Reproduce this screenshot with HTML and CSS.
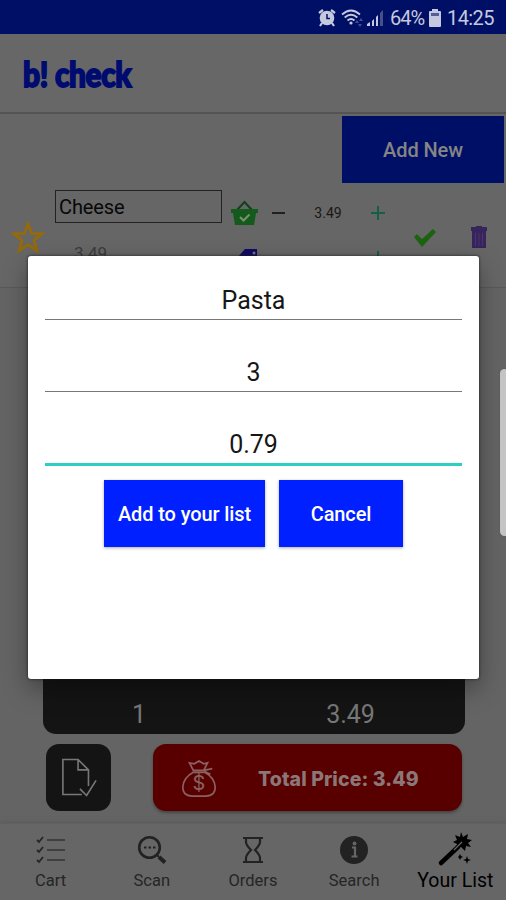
FILE: index.html
```html
<!DOCTYPE html>
<html lang="en">
<head>
<meta charset="utf-8">
<title>b! check</title>
<link rel="stylesheet" href="styles.css">
</head>
<body>
<div class="screen">
  <div class="status">
    <svg class="alarm" viewBox="0 0 18 18"><path d="M1 4 5 1M17 4 13 1M4 14l-2 3M14 14l2 3" stroke="currentColor" stroke-width="2.2"/><circle cx="9" cy="9" r="7.3" fill="currentColor"/><path d="M9 5v4.5h3" fill="none" stroke="#000f66" stroke-width="1.5"/></svg>
    <svg class="wifi" viewBox="0 0 22 18"><g fill="none" stroke="currentColor" stroke-width="1.8"><path d="M1 5.5Q10 -2.5 19 5.5M3.7 8.5Q10 3 16.3 8.5M6.5 11.5Q10 8.5 13.5 11.5"/></g><circle cx="10" cy="14" r="1.6" fill="currentColor"/><path d="m14 14 2-3 2 3zm3 1h4l-2 3zM18 12l2-3 2 3z" fill="#424e8c"/></svg>
    <svg class="signal" viewBox="0 0 17 18"><path d="M0 17v-2l3-2v4zM5 17v-5l2-2v7zM9 17V8l2-2v11z" fill="currentColor"/><path d="M13 17V4l3-3v16z" fill="#46518c"/></svg>
    <span class="percent">64%</span>
    <svg class="battery" viewBox="0 0 12 18"><path d="M3 2V0h6v2h2q1 0 1 1v14q0 1-1 1H1q-1 0-1-1V3q0-1 1-1z" fill="currentColor"/><path d="M2 4h8v3H2z" fill="#535d96"/></svg>
    <span class="clock">14:25</span>
  </div>
  <header class="brand"><span class="logo-b">b!</span><span class="logo-check">check</span></header>
  <div class="toolbar"><button class="add-new">Add New</button></div>
  <div class="item">
    <svg class="star" viewBox="0 0 34 34"><path d="m17 4 3.7 9.3 10.3.5-8 6.4 2.8 10.3L17 24.8 8.200 30.500 11 20.200 3 13.800l10.300-.5z" fill="none" stroke="#956a08" stroke-width="2.800"/></svg>
    <div class="names"><div class="name">Cheese</div><div class="hint">3.49</div></div>
    <div class="steppers">
      <div class="stepper">
        <svg class="basket" viewBox="0 0 27 24"><path d="m6 9 7.500-8L21 9" fill="none" stroke="#10401c" stroke-width="2"/><path d="M0 8h27v4h-2l-2 12H4L2 12H0z" fill="#145a1c"/><path d="m9 16 3.500 3.500 6-6" fill="none" stroke="#7d8f6b" stroke-width="2"/></svg>
        <span class="minus"></span><span class="amount">3.49</span><span class="plus"></span>
      </div>
      <div class="stepper second">
        <svg class="tag" viewBox="0 0 20 18"><path d="m0 8 7-8h12v13l-6 5z" fill="#110a60"/><circle cx="16" cy="4" r="1.500" fill="#777"/></svg>
        <span class="minus"></span><span class="amount"></span><span class="plus"></span>
      </div>
    </div>
    <svg class="check" viewBox="0 0 23 18"><path d="m1 8 3-3 5 5L20 0l3 3L9 18z" fill="#1c6310"/></svg>
    <svg class="trash" viewBox="0 0 16 22"><path d="M0 1h5V0h6v1h5v4H0zM1 5h14v17H1z" fill="#37245b"/><path d="M4.500 7v13M8 7v13M11.500 7v13" stroke="#47376a"/></svg>
  </div>
  <div class="spacer"></div>
  <div class="summary"><span>1</span><span>3.49</span></div>
  <div class="actions">
    <button class="receipt"><svg viewBox="0 0 38 40"><path d="M22 38H2V1h16l11 11v17M18 1v11h11M20 32l7 7 10-16" fill="none" stroke="#777" stroke-width="1.700"/></svg></button>
    <button class="total"><svg viewBox="0 0 36 40"><g fill="none" stroke="#8b6060" stroke-width="1.800"><path d="M12 13C-1 20-4 38 11 38h14c15 0 12-18-1-25zM12 11 8 3l5 1 5-3 5 3 4-1-4 8zM23 11l9-2M24 12l6 3"/></g><text x="18" y="32" text-anchor="middle" class="dollar">$</text></svg><span>Total Price: 3.49</span></button>
  </div>
  <nav class="tabs">
    <a class="tab"><svg viewBox="0 0 30 28"><path d="m1 4 2 2 4-5M1 14l2 2 4-5M1 24l2 2 4-5" fill="none" stroke="#252525" stroke-width="1.800"/><path d="M11 4h18M11 14h18M11 24h18" stroke="#333" stroke-width="1.500"/></svg><span>Cart</span></a>
    <a class="tab"><svg viewBox="0 0 30 28"><circle cx="12.500" cy="11.500" r="10.300" fill="none" stroke="#222" stroke-width="2.600"/><path d="m20 19 2 2" stroke="#222" stroke-width="2"/><path d="m22 21 6 5.500" stroke="#222" stroke-width="4"/><path d="M7 11.500h2.500m2 0H14m2 0h2.500" stroke="#222" stroke-width="2"/></svg><span>Scan</span></a>
    <a class="tab"><svg viewBox="0 0 30 28"><path d="M5 2h20M5 26h20M8 2v4q0 3 5 8-5 5-5 8v4M22 2v4q0 3-5 8 5 5 5 8v4" fill="none" stroke="#222" stroke-width="2.200"/></svg><span>Orders</span></a>
    <a class="tab"><svg viewBox="0 0 30 28"><circle cx="15" cy="14" r="14" fill="#222"/><path d="M13 11.500h3V20M12.500 20.500h6" fill="none" stroke="#666" stroke-width="2.200"/><circle cx="15.500" cy="7.500" r="1.900" fill="#666"/></svg><span>Search</span></a>
    <a class="tab active"><svg viewBox="0 0 34 34"><path d="m3 31 17-16" stroke="#000" stroke-width="4.500" stroke-linecap="round"/><path d="m23 0 2 5 5-3-1 5 5 1-4 3 3 4-5-1-1 5-4-4-5 2 1-5-4-2 4-2-2-5 5 2z" fill="#000"/><path d="m16 18 8-8" stroke="#666" stroke-width="1.200"/><path d="m29 24 1 3 3 1-3 1-1 3-1-3-3-1 3-1zM22 22l1 2 2 1-2 1-1 2-1-2-1-1 1-1z" fill="#000"/></svg><span>Your List</span></a>
  </nav>
  <div class="dialog">
    <div class="field">Pasta</div><div class="field">3</div><div class="field focused">0.79</div>
    <div class="buttons"><button class="submit">Add to your list</button><button class="cancel">Cancel</button></div>
  </div>
  <div class="edge"></div>
</div>
</body>
</html>
```
FILE: styles.css
```css
* { box-sizing: border-box; }
body { margin: 0; font-family: Roboto, sans-serif; }
button { border: 0; padding: 0; font-family: inherit; }
svg { display: block; flex: none; overflow: visible; }
.screen { position: relative; width: 506px; height: 900px; overflow: hidden; display: flex; flex-direction: column; background: #646464; }
.status { height: 34px; flex: none; background: #000f66; color: #c5c9df; display: flex; align-items: center; justify-content: flex-end; padding: 2px 12px 0 0; font-size: 20px; }
.alarm { width: 18px; height: 18px; margin-right: 5px; }
.wifi { width: 22px; height: 18px; margin-right: 4px; }
.signal { width: 17px; height: 18px; margin-right: 6px; }
.percent { width: 34px; margin-right: 5px; white-space: nowrap; letter-spacing: -1px; }
.battery { width: 12px; height: 18px; margin-right: 6px; }
.clock { width: 47px; white-space: nowrap; letter-spacing: -.6px; }
.brand { height: 80px; flex: none; background: #676767; border-bottom: 2px solid #545454; display: flex; align-items: center; padding-left: 23px; color: #000b70; font-family: Lato, sans-serif; font-weight: 900; font-size: 34px; letter-spacing: -.5px; -webkit-text-stroke: 1.800px #000b70; }
.brand span { transform-origin: left center; white-space: nowrap; }
.logo-b { width: 32px; transform: scaleX(.88); }
.logo-check { transform: scaleX(.88); }
.toolbar { height: 70px; flex: none; background: #666; display: flex; justify-content: flex-end; padding: 2px 2px 0 0; }
.add-new { width: 162px; height: 67px; background: #000f66; color: #858585; font-size: 20px; font-weight: 500; letter-spacing: -.1px; }
.item { height: 104px; flex: none; background: #666; border-bottom: 1px solid #595959; display: flex; }
.star { width: 34px; height: 34px; margin: 36px 10px 0 11px; }
.names { width: 167px; padding-top: 6px; }
.name { height: 33px; border: 1px solid #222; padding-left: 3px; font-size: 20px; line-height: 33px; letter-spacing: -.1px; color: #080808; }
.hint { font-size: 17px; line-height: 20px; margin: 20px 0 0 19px; color: #3c3c3c; }
.steppers { width: 191px; padding: 17px 0 0 9px; }
.stepper { display: flex; align-items: center; height: 24px; }
.second { margin-top: 21px; }
.basket { width: 27px; height: 24px; margin-right: 14px; }
.tag { width: 20px; height: 18px; margin: 0 14px 0 7px; }
.minus { width: 13px; height: 2px; background: #202020; }
.amount { width: 86px; text-align: center; font-size: 14px; color: #181818; }
.plus { width: 14px; height: 14px; background: linear-gradient(#146047, #146047) center / 2px 14px no-repeat, linear-gradient(#146047, #146047) center / 14px 2px no-repeat; }
.check { width: 23px; height: 18px; margin-top: 45px; }
.trash { width: 16px; height: 22px; margin: 42px 0 0 35px; }
.spacer { flex: 1; }
.summary { width: 422px; height: 110px; margin-left: 43px; background: #141414; border-radius: 13px; color: #777; display: flex; align-items: flex-end; padding-bottom: 4px; font-size: 25px; }
.summary span { width: 50%; text-align: center; line-height: 30px; }
.summary span:first-child { padding-right: 19px; }
.summary span:last-child { padding-right: 18px; }
.actions { height: 89px; flex: none; display: flex; padding: 10px 0 0 46px; gap: 42px; }
.receipt { width: 65px; height: 67px; border-radius: 13px; background: #141414; display: flex; align-items: center; justify-content: center; }
.receipt svg { width: 36px; height: 39px; margin-left: 0; }
.total { width: 309px; height: 67px; border-radius: 13px; background: #580000; box-shadow: 0 2px 3px #444; display: flex; align-items: center; padding: 3px 0 0 28px; gap: 41px; color: #8b7777; font-family: Inter, sans-serif; font-size: 19.500px; font-weight: 800; letter-spacing: .1px; white-space: nowrap; }
.total svg { width: 36px; height: 38px; }
.dollar { font-size: 21px; font-weight: 400; fill: #8b6060; }
.tabs { height: 77px; flex: none; background: #666; display: flex; border-top: 1px solid #606060; box-shadow: 0 -1px 4px #5c5c5c; }
.tab { width: 101.200px; display: flex; flex-direction: column; align-items: center; padding-top: 12px; font-size: 16.500px; line-height: 22px; color: #252525; white-space: nowrap; }
.tab svg { width: 30px; height: 28px; margin-bottom: 6px; }
.active { font-size: 19.500px; color: #000; padding-top: 8px; }
.active svg { width: 34px; height: 34px; margin-bottom: 4px; }
.dialog { position: absolute; left: 28px; top: 256px; width: 451px; height: 423px; padding: 0 17px; background: #fff; border-radius: 3px; box-shadow: 0 10px 25px rgba(0,0,0,.35), 0 0 3px #222; }
.field { height: 72px; border-bottom: 1px solid #777; padding-top: 33px; font-size: 25px; line-height: 40px; text-align: center; color: #161616; white-space: nowrap; }
.field:first-child { height: 64px; padding-top: 25px; }
.field.focused { height: 74px; border-bottom: 3px solid #2dcfc0; }
.buttons { display: flex; gap: 14px; padding: 14px 0 0 59px; }
.buttons button { height: 67px; background: #0020ff; color: #fff; font-size: 20px; font-weight: 500; letter-spacing: -.1px; box-shadow: 0 1px 3px #aaa; white-space: nowrap; }
.submit { width: 161px; }
.cancel { width: 124px; }
.edge { position: absolute; right: -3px; top: 369px; width: 9px; height: 167px; background: #c4c4c4; border-radius: 5px; box-shadow: 0 0 2px #555; }
```
